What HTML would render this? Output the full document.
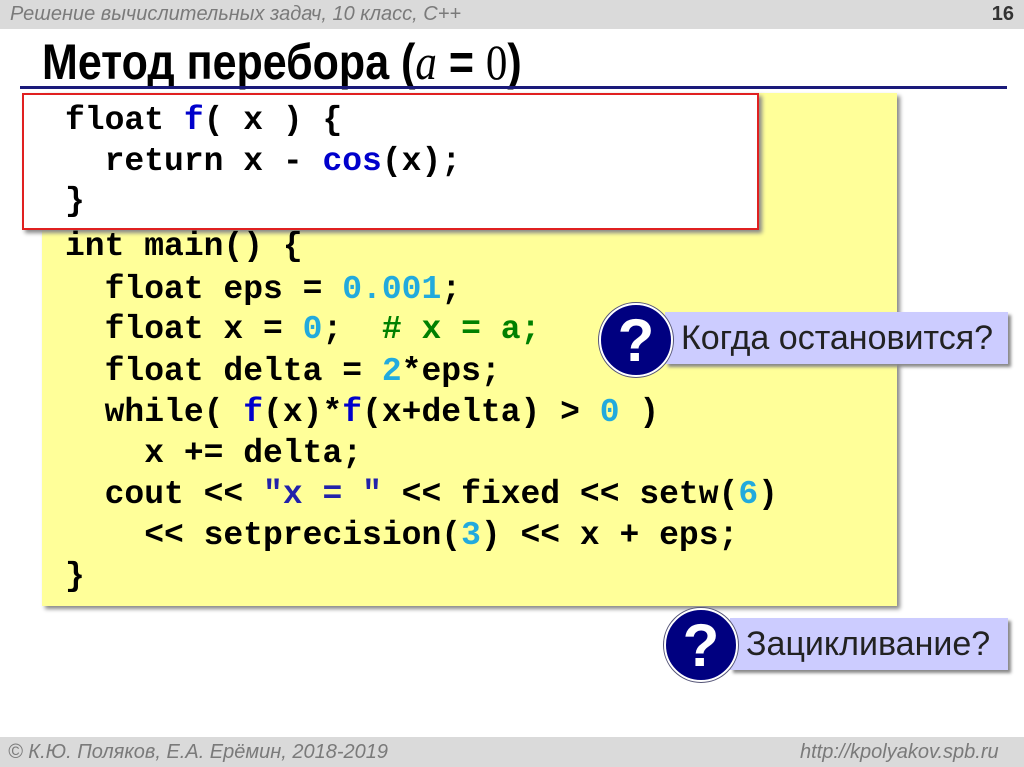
<!DOCTYPE html>
<html><head><meta charset="utf-8"><style>
body{margin:0;width:1024px;height:767px;position:relative;overflow:hidden;background:#fff;font-family:"Liberation Sans",sans-serif}
.hdr{position:absolute;left:0;top:0;width:1024px;height:29px;background:#dadada}
.ftr{position:absolute;left:0;top:737px;width:1024px;height:30px;background:#dadada}
.gi{position:absolute;color:#7a7a7a;font-style:italic;font-size:20px;transform-origin:left}
.title{position:absolute;left:42px;top:33px;font-size:50px;font-weight:bold;transform:scaleX(.86);transform-origin:left;color:#000}
.line{position:absolute;left:20px;top:86px;width:987px;height:3px;background:#1a1a7a}
.yel{position:absolute;left:42px;top:93px;width:855px;height:513px;background:#ffff99;box-shadow:3px 3px 4px #888}
.red{position:absolute;left:22px;top:93px;width:733px;height:133px;background:#fff;border:2px solid #e02020;box-shadow:3px 3px 4px #888}
.c{position:absolute;font-family:"Liberation Mono",monospace;font-size:33px;font-weight:bold;color:#000;white-space:pre;line-height:40px}
.b{color:#0000cc}.n{color:#22aadd}.g{color:#008000}.s{color:#2222aa}
.lab{position:absolute;background:#ccccff;box-shadow:3px 3px 3px #888;font-size:34px;color:#222;line-height:52px;padding-left:16px}
.q{position:absolute;width:70px;height:70px;border-radius:50%;background:#000080;border:2px solid #fff;box-shadow:0 0 0 1px #557;color:#fff;font-weight:bold;font-size:60px;text-align:center;line-height:72px}
</style></head><body>
<div class="hdr"></div>
<div class="gi" style="left:10px;top:3px">Решение  вычислительных задач, 10 класс, С++</div>
<div style="position:absolute;right:10px;top:3px;font-weight:bold;font-size:20px;color:#333">16</div>
<div class="title">Метод перебора (<i style="font-family:'Liberation Serif',serif;font-weight:normal">a</i> = <span style="font-family:'Liberation Serif',serif;font-weight:normal">0</span>)</div>
<div class="line"></div>
<div class="yel"></div>
<div class="red"></div>
<div class="c" style="left:65px;top:101px">float <span class="b">f</span>( x ) {</div>
<div class="c" style="left:65px;top:142px">  return x - <span class="b">cos</span>(x);</div>
<div class="c" style="left:65px;top:182px">}</div>
<div class="c" style="left:65px;top:227px">int main() {</div>
<div class="c" style="left:65px;top:270px">  float eps = <span class="n">0.001</span>;</div>
<div class="c" style="left:65px;top:310px">  float x = <span class="n">0</span>;  <span class="g"># x = a;</span></div>
<div class="c" style="left:65px;top:352px">  float delta = <span class="n">2</span>*eps;</div>
<div class="c" style="left:65px;top:393px">  while( <span class="b">f</span>(x)*<span class="b">f</span>(x+delta) > <span class="n">0</span> )</div>
<div class="c" style="left:65px;top:434px">    x += delta;</div>
<div class="c" style="left:65px;top:475px">  cout &lt;&lt; <span class="s">"x = "</span> &lt;&lt; fixed &lt;&lt; setw(<span class="n">6</span>)</div>
<div class="c" style="left:65px;top:516px">    &lt;&lt; setprecision(<span class="n">3</span>) &lt;&lt; x + eps;</div>
<div class="c" style="left:65px;top:557px">}</div>
<div class="lab" style="left:665px;top:312px;width:327px;height:52px">Когда остановится?</div>
<div class="q" style="left:599px;top:303px">?</div>
<div class="lab" style="left:730px;top:618px;width:262px;height:52px">Зацикливание?</div>
<div class="q" style="left:664px;top:608px">?</div>
<div class="ftr"></div>
<div class="gi" style="left:8px;top:741px">© К.Ю. Поляков, Е.А. Ерёмин, 2018-2019</div>
<div class="gi" style="left:800px;top:741px">http://kpolyakov.spb.ru</div>
</body></html>
